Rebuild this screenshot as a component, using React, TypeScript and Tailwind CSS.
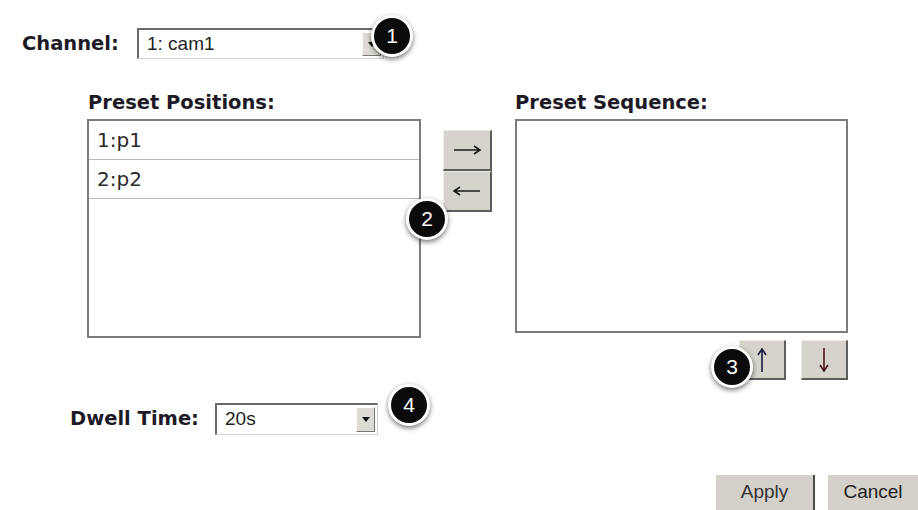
interface SelectBoxProps {
  value: string;
  className: string;
}

const SelectBox = ({ value, className }: SelectBoxProps) => {
  return (
    <div
      className={`flex items-stretch bg-white border-t-2 border-l-2 border-b border-r border-t-[#6a6a6a] border-l-[#6a6a6a] border-b-[#cfcfcf] border-r-[#cfcfcf] ${className}`}
    >
      <span className="flex-1 pl-[8px] flex items-center font-['Liberation_Sans',Arial,sans-serif] text-[19px] text-[#222]">
        {value}
      </span>
      <span className="w-[19px] my-[2px] mr-[2px] flex items-center justify-center bg-[#dedbd4] border-t border-l border-t-white border-l-white border-b border-r border-b-[#777] border-r-[#777]">
        <svg width="8" height="5" viewBox="0 0 8 5">
          <path d="M0 0 L8 0 L4 5 Z" fill="#111" />
        </svg>
      </span>
    </div>
  );
};

const Badge = ({ n, className }: { n: number; className: string }) => {
  return (
    <div
      className={`absolute w-[42px] h-[42px] rounded-full bg-[#0b0b0b] border-[3px] border-white shadow-[0_2px_5px_rgba(0,0,0,0.55)] flex items-center justify-center text-white font-['Liberation_Sans',Arial,sans-serif] text-[21px] ${className}`}
    >
      {n}
    </div>
  );
};

const GrayButton = ({ children, className }: { children: React.ReactNode; className: string }) => {
  return (
    <div
      className={`flex items-center justify-center bg-[#d6d3cc] border-t border-l border-t-[#ecebe6] border-l-[#ecebe6] border-b-2 border-r-2 border-b-[#5d5d5d] border-r-[#5d5d5d] ${className}`}
    >
      {children}
    </div>
  );
};

const Arrow = ({ dir }: { dir: "right" | "left" | "up" | "down" }) => {
  const paths: Record<string, string> = {
    right: "M2 8 H28 M22 4 L28 8 L22 12",
    left: "M2 8 H28 M8 4 L2 8 L8 12",
  };
  if (dir === "up" || dir === "down") {
    return (
      <svg width="12" height="26" viewBox="0 0 12 26">
        <path
          d={dir === "up" ? "M6 2 V25 M2 8 L6 2 L10 8" : "M6 1 V24 M2 18 L6 24 L10 18"}
          stroke={dir === "up" ? "#1a1a3a" : "#4a1a1a"}
          strokeWidth="1.6"
          fill="none"
        />
      </svg>
    );
  }
  return (
    <svg width="30" height="16" viewBox="0 0 30 16">
      <path d={paths[dir]} stroke="#1a1a1a" strokeWidth="1.6" fill="none" />
    </svg>
  );
};

const App = () => {
  return (
    <div className="relative w-[918px] h-[510px] bg-white overflow-hidden font-['DejaVu_Sans',Verdana,sans-serif] text-[#1d1a26]">
      {/* channel */}
      <div className="flex items-center pt-[28px] pl-[22px]">
        <span className="w-[115px] font-bold text-[19.5px] leading-[20px]">Channel:</span>
        <SelectBox value="1: cam1" className="w-[247px] h-[31px]" />
      </div>

      {/* lists */}
      <div className="flex items-start pl-[87px] mt-[34px]">
        <div className="w-[334px]">
          <div className="font-bold text-[19.5px] leading-[20px] mb-[6px] pl-[1px]">Preset Positions:</div>
          <div className="h-[219px] border-2 border-[#7c7c7c] bg-white">
            {["1:p1", "2:p2"].map((p) => (
              <div
                key={p}
                className="h-[39px] border-b border-[#b8b8b8] flex items-center pl-[8px] text-[20px] text-[#2a2a2a]"
              >
                {p}
              </div>
            ))}
          </div>
        </div>

        <div className="ml-[22px] pt-[37px] flex flex-col">
          <GrayButton className="w-[49px] h-[41px]">
            <Arrow dir="right" />
          </GrayButton>
          <GrayButton className="w-[49px] h-[41px]">
            <Arrow dir="left" />
          </GrayButton>
        </div>

        <div className="ml-[23px] w-[333px]">
          <div className="font-bold text-[19.5px] leading-[20px] mb-[6px]">Preset Sequence:</div>
          <div className="h-[214px] border-2 border-[#7c7c7c] bg-white" />
          <div className="flex justify-end gap-[15px] mt-[7px]">
            <GrayButton className="w-[47px] h-[40px]">
              <Arrow dir="up" />
            </GrayButton>
            <GrayButton className="w-[47px] h-[40px]">
              <Arrow dir="down" />
            </GrayButton>
          </div>
        </div>
      </div>

      {/* dwell */}
      <div className="flex items-center pl-[70px] mt-[23px]">
        <span className="w-[145px] font-bold text-[19.5px] leading-[20px]">Dwell Time:</span>
        <SelectBox value="20s" className="w-[163px] h-[32px]" />
      </div>

      {/* actions */}
      <div className="flex justify-end gap-[13px] mt-[40px]">
        <div className="w-[99px] h-[35px] bg-[#d4d1cb] border-r-2 border-[#4a4a4a] flex items-center justify-center font-['Liberation_Sans',Arial,sans-serif] text-[19px] text-[#333]">
          Apply
        </div>
        <div className="w-[90px] h-[35px] bg-[#d4d1cb] flex items-center justify-center font-['Liberation_Sans',Arial,sans-serif] text-[19px] text-[#222]">
          Cancel
        </div>
      </div>

      <Badge n={1} className="left-[371px] top-[15px]" />
      <Badge n={2} className="left-[406px] top-[198px]" />
      <Badge n={3} className="left-[711px] top-[346px]" />
      <Badge n={4} className="left-[388px] top-[384px]" />
    </div>
  );
};

export default App;
